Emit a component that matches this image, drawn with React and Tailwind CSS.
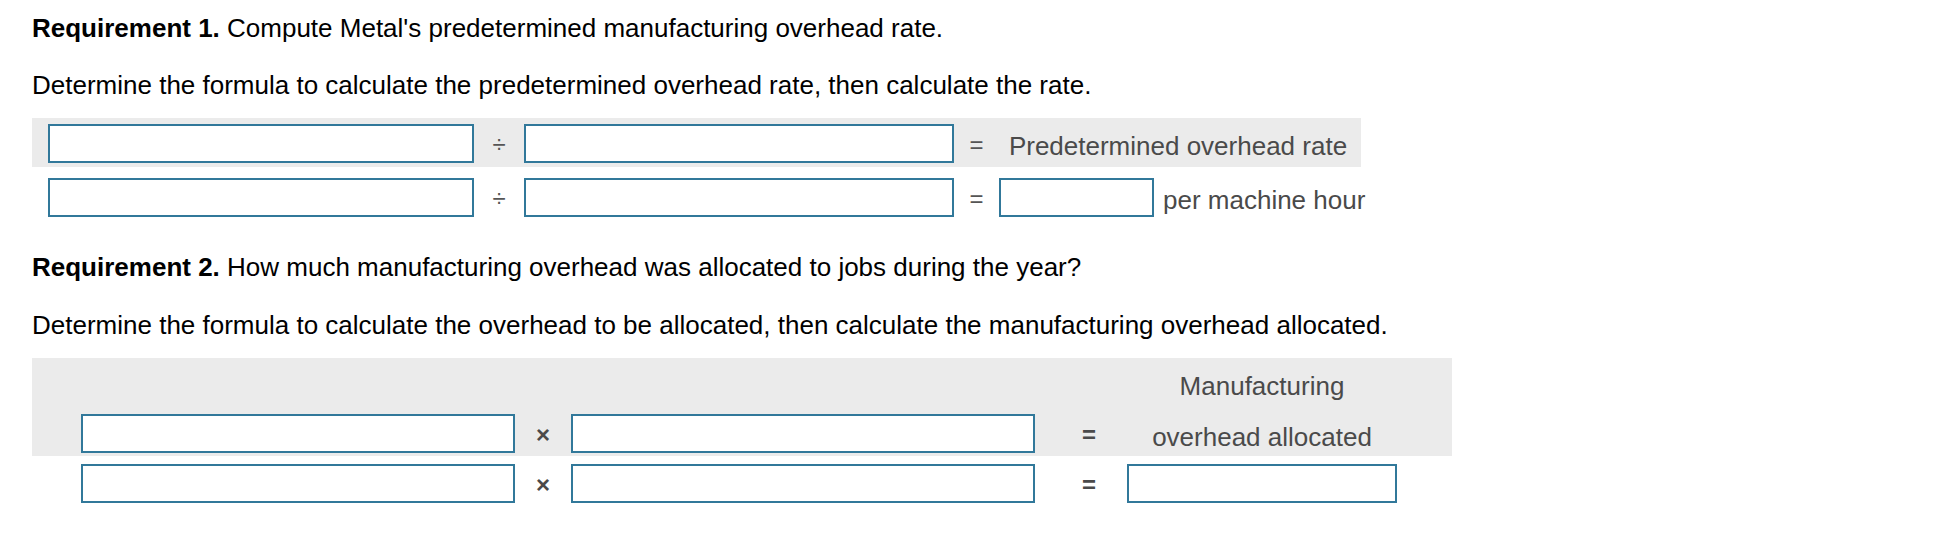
const font = { fontFamily: '"Liberation Sans", Arial, sans-serif' }

function Box({ className = '' }) {
  return (
    <div
      className={`h-[39px] border-2 border-[#31789a] bg-white shrink-0 ${className}`}
    />
  )
}

function Op({ children, className = '' }) {
  return (
    <div
      className={`shrink-0 flex justify-center items-center text-[24px] leading-[30px] ${className}`}
    >
      {children}
    </div>
  )
}

export default function App() {
  return (
    <div
      className="w-[1946px] h-[536px] bg-white text-black text-[26px] leading-[30px] pl-8 pt-[13px]"
      style={font}
    >
      {/* REQUIREMENT 1 */}
      <p>
        <span className="font-bold">Requirement 1.</span> Compute Metal's
        predetermined manufacturing overhead rate.
      </p>
      <p className="mt-[27px]">
        Determine the formula to calculate the predetermined overhead rate,
        then calculate the rate.
      </p>

      <div className="mt-[18px] w-[1329px] bg-[#ebebeb] pl-4 pt-[6px] pb-[4px] flex items-center">
        <Box className="w-[426px]" />
        <Op className="w-[50px] text-[#555] pt-[2px]">÷</Op>
        <Box className="w-[430px]" />
        <Op className="w-[45px] text-[#555] pt-[2px]">=</Op>
        <div className="w-[358px] text-center text-[#4a4a4a] pt-[4px]">
          Predetermined overhead rate
        </div>
      </div>
      <div className="mt-[11px] pl-4 flex items-center">
        <Box className="w-[426px]" />
        <Op className="w-[50px] text-[#555] pt-[2px]">÷</Op>
        <Box className="w-[430px]" />
        <Op className="w-[45px] text-[#555] pt-[2px]">=</Op>
        <Box className="w-[155px]" />
        <span className="ml-[9px] text-[#4a4a4a] pt-[4px]">
          per machine hour
        </span>
      </div>

      {/* REQUIREMENT 2 */}
      <p className="mt-[35px]">
        <span className="font-bold">Requirement 2.</span> How much
        manufacturing overhead was allocated to jobs during the year?
      </p>
      <p className="mt-[28px]">
        Determine the formula to calculate the overhead to be allocated, then
        calculate the manufacturing overhead allocated.
      </p>

      <div className="mt-[18px] w-[1420px] bg-[#ebebeb] pl-[49px] pt-[13px] pb-[3px]">
        <div className="flex">
          <div className="w-[1046px] shrink-0" />
          <div className="w-[270px] text-center text-[#4a4a4a]">
            Manufacturing
          </div>
        </div>
        <div className="mt-[13px] flex items-center">
          <Box className="w-[434px]" />
          <Op className="w-[56px] font-bold text-[#4a4a4a] pt-[2px]">×</Op>
          <Box className="w-[464px]" />
          <Op className="w-[92px] pl-4 font-bold text-[#4a4a4a] pt-[2px]">=</Op>
          <div className="w-[270px] text-center text-[#4a4a4a] pt-[6px]">
            overhead allocated
          </div>
        </div>
      </div>
      <div className="mt-[8px] pl-[49px] flex items-center">
        <Box className="w-[434px]" />
        <Op className="w-[56px] font-bold text-[#4a4a4a] pt-[2px]">×</Op>
        <Box className="w-[464px]" />
        <Op className="w-[92px] pl-4 font-bold text-[#4a4a4a] pt-[2px]">=</Op>
        <Box className="w-[270px]" />
      </div>
    </div>
  )
}
